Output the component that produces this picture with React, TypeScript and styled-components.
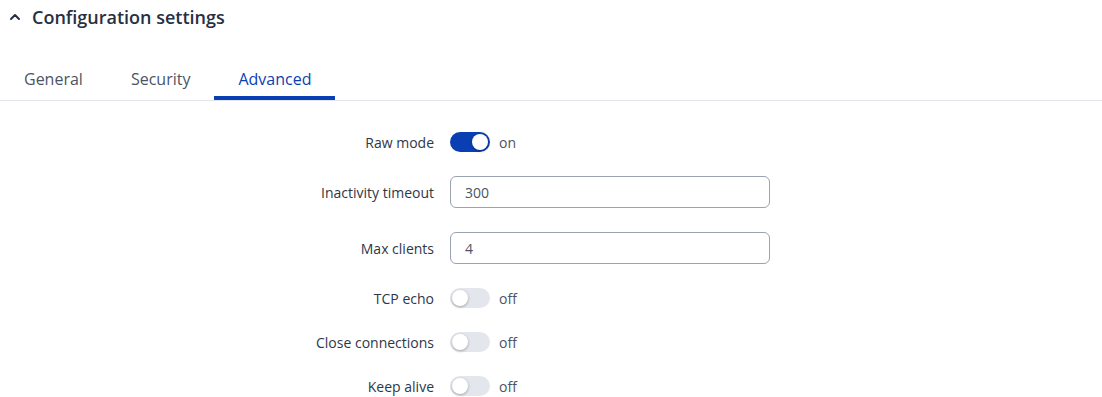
import React, { useState } from 'react';
import styled, { createGlobalStyle } from 'styled-components';

const GlobalStyle = createGlobalStyle`
  html, body {
    margin: 0;
    padding: 0;
    background: #ffffff;
    font-family: "Open Sans", "Noto Sans", sans-serif;
    color: #1f2937;
  }
`;

const Page = styled.div`
  width: 1102px;
  height: 397px;
  overflow: hidden;
  background: #fff;
`;

const Header = styled.div`
  display: flex;
  align-items: center;
  height: 34px;
  padding-left: 8px;
  gap: 10px;
  font-size: 18px;
  font-weight: 600;
  color: #263042;
`;

const Tabs = styled.div`
  display: flex;
  margin-top: 23px;
  border-bottom: 1px solid #e2e5ea;
`;

const Tab = styled.div<{ $active?: boolean }>`
  position: relative;
  padding: 0 24px;
  height: 43px;
  display: flex;
  align-items: center;
  font-size: 16px;
  color: ${p => (p.$active ? '#0a3fb3' : '#4b5565')};
  cursor: pointer;
  &::after {
    content: '';
    position: absolute;
    left: 0;
    right: 0;
    bottom: 0;
    height: 4px;
    background: ${p => (p.$active ? '#0a3fb3' : 'transparent')};
  }
`;

const Form = styled.div`
  display: flex;
  flex-direction: column;
  gap: 12px;
  padding-top: 25px;
`;

const Row = styled.div<{ $input?: boolean }>`
  display: grid;
  grid-template-columns: 434px 1fr;
  column-gap: 16px;
  align-items: center;
  height: ${p => (p.$input ? '44px' : '32px')};
`;

const Label = styled.label`
  text-align: right;
  font-size: 14px;
  color: #2d3748;
`;

const Control = styled.div`
  display: flex;
  align-items: center;
  gap: 9px;
`;

const TextInput = styled.input`
  box-sizing: border-box;
  width: 320px;
  height: 32px;
  border: 1px solid #9aa3b2;
  border-radius: 6px;
  padding: 0 14px;
  font-family: inherit;
  font-size: 14px;
  color: #4b5563;
  outline: none;
`;

const Track = styled.button<{ $on: boolean }>`
  position: relative;
  width: 40px;
  height: 20px;
  border: none;
  padding: 0;
  border-radius: 10px;
  background: ${p => (p.$on ? '#0a3fb3' : '#e3e6ec')};
  cursor: pointer;
`;

const Knob = styled.span<{ $on: boolean }>`
  position: absolute;
  top: 2px;
  left: ${p => (p.$on ? '22px' : '2px')};
  width: 16px;
  height: 16px;
  border-radius: 50%;
  background: #fff;
  box-shadow: 0 1px 3px rgba(0, 0, 0, 0.3);
`;

const State = styled.span`
  font-size: 14px;
  color: #4b5565;
`;

const Toggle: React.FC<{ initial: boolean }> = ({ initial }) => {
  const [on, setOn] = useState(initial);
  return (
    <Control>
      <Track $on={on} onClick={() => setOn(!on)}>
        <Knob $on={on} />
      </Track>
      <State>{on ? 'on' : 'off'}</State>
    </Control>
  );
};

export default function App() {
  return (
    <Page>
      <GlobalStyle />
      <Header>
        <svg width="14" height="14" viewBox="0 0 14 14">
          <path d="M3 9 L7 5 L11 9" fill="none" stroke="#263042" strokeWidth="2" strokeLinecap="round" strokeLinejoin="round" />
        </svg>
        Configuration settings
      </Header>
      <Tabs>
        <Tab>General</Tab>
        <Tab>Security</Tab>
        <Tab $active>Advanced</Tab>
      </Tabs>
      <Form>
        <Row>
          <Label>Raw mode</Label>
          <Toggle initial={true} />
        </Row>
        <Row $input>
          <Label>Inactivity timeout</Label>
          <Control><TextInput defaultValue="300" /></Control>
        </Row>
        <Row $input>
          <Label>Max clients</Label>
          <Control><TextInput defaultValue="4" /></Control>
        </Row>
        <Row>
          <Label>TCP echo</Label>
          <Toggle initial={false} />
        </Row>
        <Row>
          <Label>Close connections</Label>
          <Toggle initial={false} />
        </Row>
        <Row>
          <Label>Keep alive</Label>
          <Toggle initial={false} />
        </Row>
      </Form>
    </Page>
  );
}
